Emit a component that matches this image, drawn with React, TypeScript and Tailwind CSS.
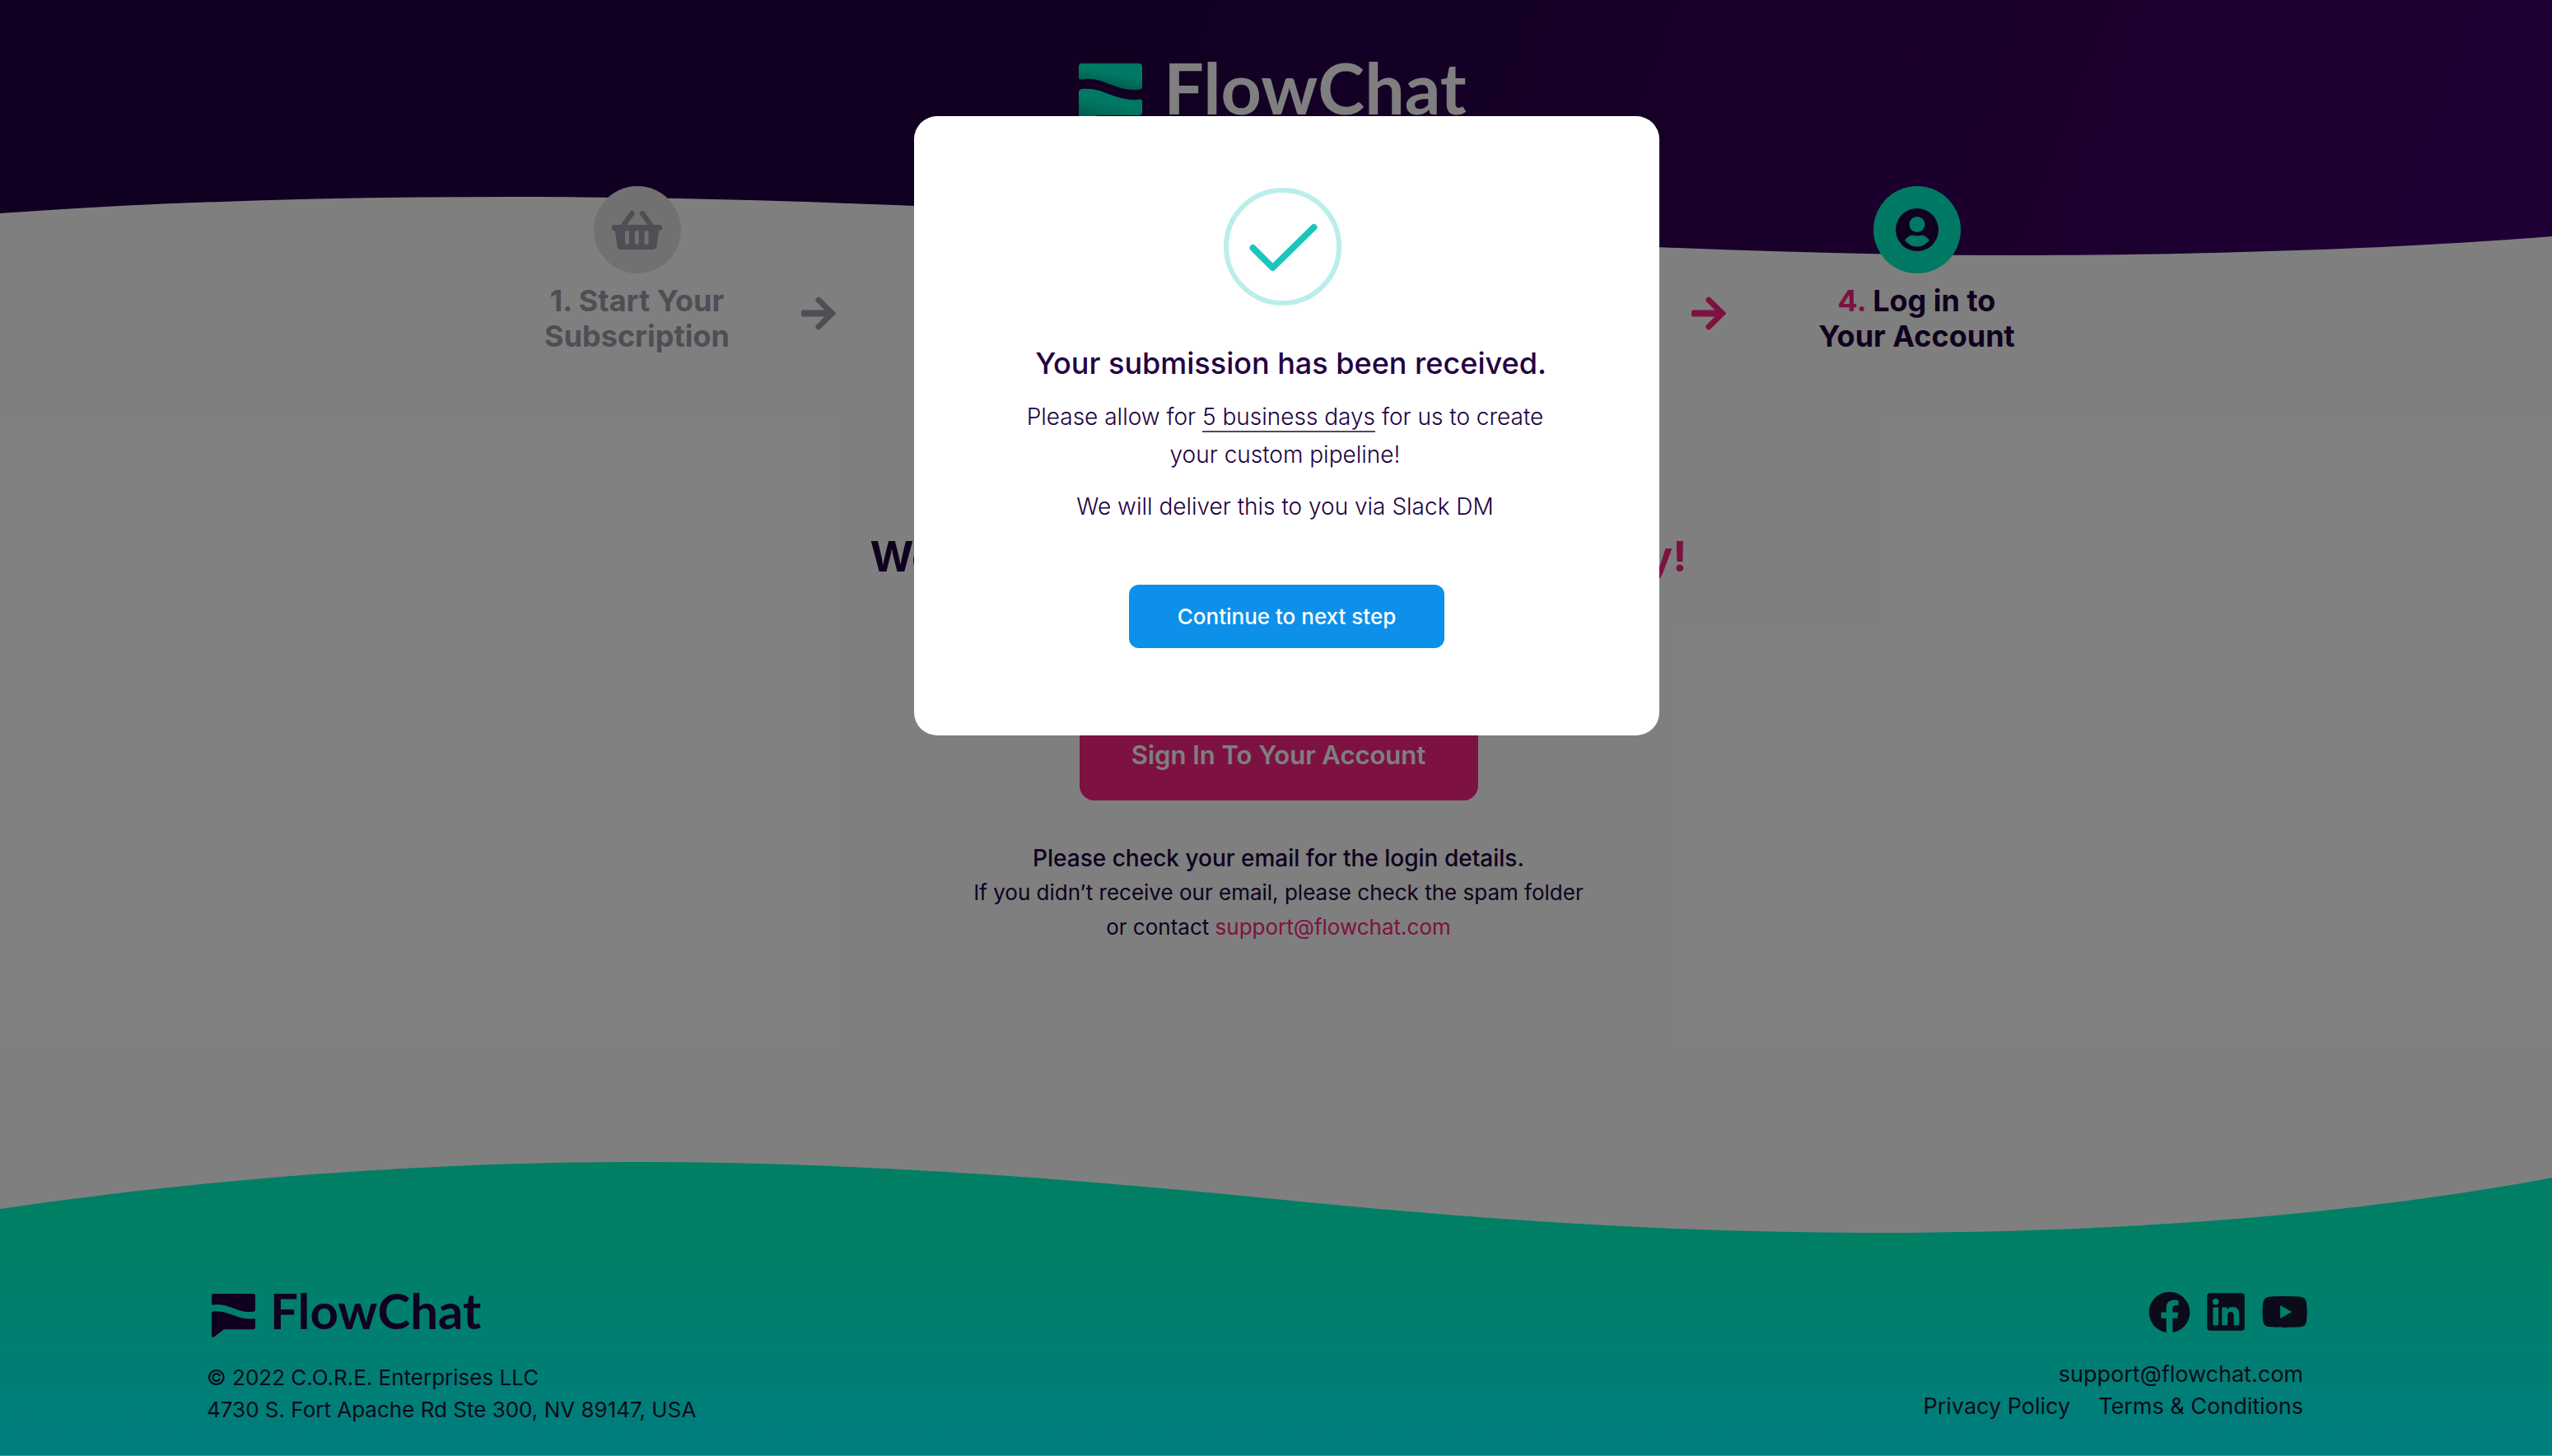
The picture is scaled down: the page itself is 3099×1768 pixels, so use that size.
import { FaFacebook, FaLinkedin, FaYoutube } from "react-icons/fa";

function LogoMark({ className, gradient }: { className: string; gradient?: boolean }) {
  return (
    <svg viewBox="0 0 77 77" className={className} aria-hidden="true">
      {gradient && (
        <defs>
          <linearGradient id="mark" x1="0.7" y1="0" x2="0.3" y2="1">
            <stop offset="0.4" stopColor="#00f2c8" />
            <stop offset="1" stopColor="#00a688" />
          </linearGradient>
        </defs>
      )}
      <g fill={gradient ? "url(#mark)" : "currentColor"}>
        <path d="M4 0H73q4 0 4 4V28.500q0 2.500-3 3C46 36 30 15 4 19.500q-4 .500-4-2V4q0-4 4-4z" />
        <path d="M3 31.300C28 27.500 45 47 73 43.800q4-.800 4 2V59q0 4-4 4H24q-3 0-5 2L4 76.300Q0 78 0 74V35q0-3.200 3-3.700z" />
      </g>
    </svg>
  );
}

function BasketIcon() {
  return (
    <svg viewBox="0 0 61 47" className="w-[61px] text-[#a19aaa]" aria-hidden="true">
      <g stroke="currentColor" strokeWidth="6.300" strokeLinecap="round">
        <path d="M24.500 3.200L13 19M37 3.200L48.500 19" />
      </g>
      <rect y="17" width="61" height="7" rx="3" fill="currentColor" />
      <path d="M3.500 22H57.500L54.500 43q-.500 4-4.500 4H11q-4 0-4.500-4z" fill="currentColor" />
      <g fill="#e3e3e3">
        <rect x="16" y="24" width="5" height="17" rx="2.500" />
        <rect x="27.800" y="24" width="5" height="17" rx="2.500" />
        <rect x="39.500" y="24" width="5" height="17" rx="2.500" />
      </g>
    </svg>
  );
}

function UserIcon() {
  return (
    <svg viewBox="0 0 52 52" className="w-[52px]" aria-hidden="true">
      <circle cx="26" cy="26" r="26" fill="#20003e" />
      <g fill="#00f2c8">
        <circle cx="26" cy="19.500" r="9.500" />
        <path d="M11 38.500Q16 32.500 20.500 32.500Q26 34.200 31.500 32.500Q36 32.500 41 38.500Q35 46.500 26 46.500Q17 46.500 11 38.500z" />
      </g>
    </svg>
  );
}

function Arrow({ className }: { className: string }) {
  return (
    <svg viewBox="0 0 42 41" className={className} fill="none" stroke="currentColor" aria-hidden="true">
      <rect y="16.500" width="38" height="8" rx="2" fill="currentColor" stroke="none" />
      <path d="M21 4.200L37.500 20.500L21 36.800" strokeWidth="7" strokeLinecap="round" />
    </svg>
  );
}

function Header() {
  return (
    <header className="relative">
      <svg
        viewBox="0 0 3099 311"
        preserveAspectRatio="none"
        className="absolute inset-x-0 top-0 -z-10 h-[311px] w-full"
        aria-hidden="true"
      >
        <defs>
          <linearGradient id="night" gradientUnits="userSpaceOnUse" x1="1300" y1="0" x2="2900" y2="600">
            <stop offset="0" stopColor="#220042" />
            <stop offset="0.65" stopColor="#36005a" />
            <stop offset="1" stopColor="#3e006a" />
          </linearGradient>
        </defs>
        <path
          fill="url(#night)"
          d="M0 0H3099V287C2900 303 2650 310 2450 310C2150 310 1849 294 1549 274C1249 253 900 239 620 239C420 239 210 244 0 259z"
        />
      </svg>
      <div className="flex items-start justify-center gap-[26px] pt-[77px] pr-2">
        <LogoMark className="w-[77px]" gradient />
        <span className="font-['Lato'] text-[86px] leading-[58px] font-bold text-white">FlowChat</span>
      </div>
      <ol className="mx-auto mt-[72px] flex w-[1804px] max-w-full justify-between text-center text-[36px] leading-[43px] font-bold">
        <li className="flex items-center gap-[73px] text-[#a19aaa]">
          <div className="flex w-[252px] flex-col items-center gap-3">
            <div className="flex size-[106px] items-center justify-center rounded-full bg-[#e3e3e3]">
              <BasketIcon />
            </div>
            <p>
              1. Start Your
              <br />
              Subscription
            </p>
          </div>
          <Arrow className="mt-[104px] w-[42px]" />
        </li>
        <li className="flex items-center gap-[108px] text-[#20003e]">
          <Arrow className="mt-[104px] w-[42px] text-[#fa2484]" />
          <div className="flex w-[248px] flex-col items-center gap-3">
            <div className="flex size-[106px] items-center justify-center rounded-full bg-[#00f2c8]">
              <UserIcon />
            </div>
            <p>
              <span className="text-[#fa2484]">4.</span> Log in to
              <br />
              Your Account
            </p>
          </div>
        </li>
      </ol>
    </header>
  );
}

function Footer() {
  return (
    <footer className="relative mt-auto flex items-end justify-between pt-[154px] pr-[296px] pb-9 pl-[251px] leading-[39px] text-[#161632]">
      <svg
        viewBox="0 0 3099 356"
        preserveAspectRatio="none"
        className="absolute inset-0 -z-10 h-full w-full"
        aria-hidden="true"
      >
        <defs>
          <linearGradient id="sea" x1="0" y1="0" x2="0" y2="1">
            <stop offset="0.3" stopColor="#00ffcb" />
            <stop offset="1" stopColor="#00fbff" />
          </linearGradient>
        </defs>
        <path
          fill="url(#sea)"
          d="M0 57C250 20 520 0 775 0C1035 0 1289 19 1549 45C1809 71 2040 86 2271 86C2531 86 2829 70 3099 19V356H0z"
        />
      </svg>
      <div>
        <div className="flex items-start gap-[18px] pl-1.5 text-[#20003e]">
          <LogoMark className="w-[53px]" />
          <span className="font-['Lato'] text-[60px] leading-[40px] font-bold">FlowChat</span>
        </div>
        <p className="mt-[29px] text-[26px]">
          © 2022 C.O.R.E. Enterprises LLC
          <br />
          4730 S. Fort Apache Rd Ste 300, NV 89147, USA
        </p>
      </div>
      <div className="flex flex-col items-end pb-1 text-[27px]">
        <div className="flex items-center gap-5">
          <a href="#facebook" aria-label="Facebook">
            <FaFacebook className="size-[51px]" />
          </a>
          <a href="#linkedin" aria-label="LinkedIn">
            <FaLinkedin className="h-[52px] w-[46px]" />
          </a>
          <a href="#youtube" aria-label="YouTube">
            <FaYoutube className="h-[56px] w-[57px]" />
          </a>
        </div>
        <a href="mailto:support@flowchat.com" className="mt-[28px] mr-1.5">
          support@flowchat.com
        </a>
        <div className="mr-1.5 flex gap-[34px]">
          <a href="#privacy">Privacy Policy</a>
          <a href="#terms">Terms &amp; Conditions</a>
        </div>
      </div>
    </footer>
  );
}

function SubmissionDialog() {
  return (
    <div className="absolute inset-0 flex items-start justify-center bg-black/50 pt-[141px] pl-[26px]">
      <div
        role="dialog"
        aria-modal="true"
        aria-labelledby="dialog-title"
        className="flex w-[905px] max-w-full flex-col items-center rounded-[28px] bg-white pt-[87px] pb-[106px] text-center text-[#220042]"
      >
        <svg viewBox="0 0 143 143" className="mr-2.5 w-[143px]" fill="none" aria-hidden="true">
          <circle cx="71.500" cy="71.500" r="68.500" stroke="#bbeeeb" strokeWidth="6" />
          <path d="M8 38.500L12.500 43M100.500 131L104.500 135" stroke="#8fdedb" strokeWidth="1" />
          <path
            d="M35.500 73L59.500 97L109.500 48"
            stroke="#1cc5be"
            strokeWidth="8"
            strokeLinecap="round"
            strokeLinejoin="round"
          />
        </svg>
        <h2 id="dialog-title" className="mt-[43px] pl-2.5 text-[36px] leading-[54px] font-medium">
          Your submission has been received.
        </h2>
        <div className="mt-[15px] flex flex-col gap-[17px] pr-1 text-[28px] leading-[46px] font-light">
          <p>
            Please allow for <span className="border-b-2 border-[#5a4070]">5 business days</span> for us to create
            <br />
            your custom pipeline!
          </p>
          <p>We will deliver this to you via Slack DM</p>
        </div>
        <button
          type="button"
          className="mt-[72px] h-[77px] w-[383px] rounded-xl bg-[#0d90ea] text-[26px] font-medium text-white"
        >
          Continue to next step
        </button>
      </div>
    </div>
  );
}

export default function App() {
  return (
    <div className="relative isolate flex min-h-screen flex-col bg-white pb-px font-['Inter',sans-serif] text-[#20003e]">
      <Header />
      <main className="flex flex-col items-center pr-6 pl-[30px] text-center">
        <h1 className="mt-[214px] flex w-[992px] max-w-full justify-between text-[51px] leading-[64px] font-bold">
          <span>Welcome! Your account is</span>
          <span className="text-[#fa2484]">ready!</span>
        </h1>
        <button
          type="button"
          className="mt-[154px] h-[110px] w-[484px] rounded-[18px] bg-[#fa2484] text-[31px] font-semibold text-white"
        >
          Sign In To Your Account
        </button>
        <p className="mt-[49px] text-[28px] leading-[42px] font-medium">Please check your email for the login details.</p>
        <p className="text-[26px] leading-[42px]">
          If you didn’t receive our email, please check the spam folder
          <br />
          or contact{" "}
          <a href="mailto:support@flowchat.com" className="text-[#fa2484]">
            support@flowchat.com
          </a>
        </p>
      </main>
      <Footer />
      <SubmissionDialog />
    </div>
  );
}
